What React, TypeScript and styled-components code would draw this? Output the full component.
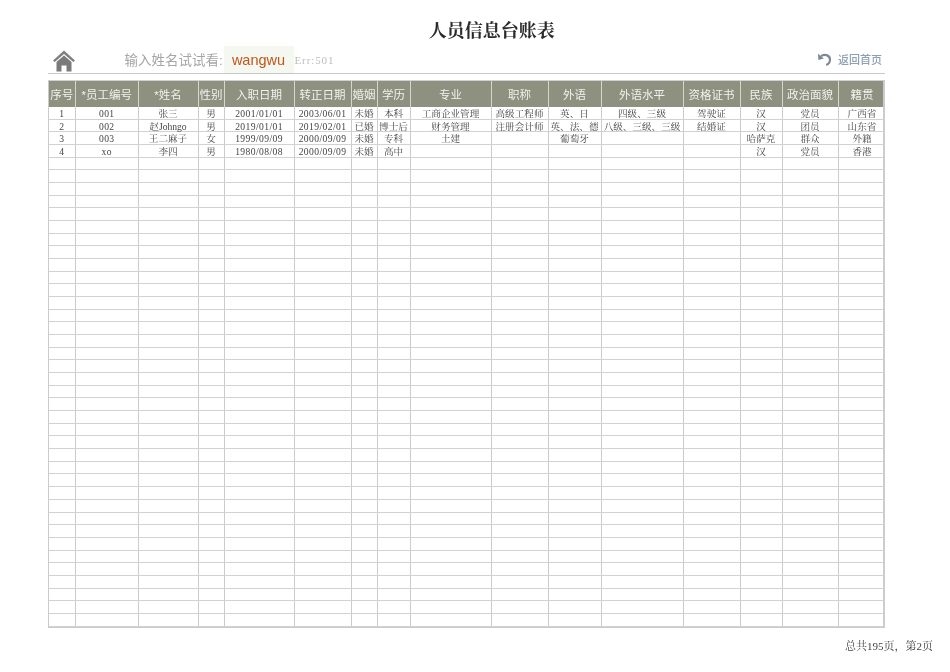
import { createGlobalStyle, styled } from "styled-components";

const GlobalStyle = createGlobalStyle`
  html, body {
    margin: 0;
    padding: 0;
    background: #fff;
  }
`;

const serif = `"Liberation Serif", "Noto Serif CJK SC", "Noto Sans CJK SC", serif`;
const sans = `"Liberation Sans", "Noto Sans CJK SC", sans-serif`;

const columns = "27.5px 62.5px 60px 26px 70px 57px 26px 33px 81px 57px 53px 82px 57px 42px 56px 47px";

const headers = [
  "序号", "*员工编号", "*姓名", "性别", "入职日期", "转正日期", "婚姻", "学历",
  "专业", "职称", "外语", "外语水平", "资格证书", "民族", "政治面貌", "籍贯",
];

const people = [
  ["1", "001", "张三", "男", "2001/01/01", "2003/06/01", "未婚", "本科", "工商企业管理", "高级工程师", "英、日", "四级、三级", "驾驶证", "汉", "党员", "广西省"],
  ["2", "002", "赵Johngo", "男", "2019/01/01", "2019/02/01", "已婚", "博士后", "财务管理", "注册会计师", "英、法、德", "八级、三级、三级", "结婚证", "汉", "团员", "山东省"],
  ["3", "003", "王二麻子", "女", "1999/09/09", "2000/09/09", "未婚", "专科", "土建", "", "葡萄牙", "", "", "哈萨克", "群众", "外籍"],
  ["4", "xo", "李四", "男", "1980/08/08", "2000/09/09", "未婚", "高中", "", "", "", "", "", "汉", "党员", "香港"],
];

const TOTAL_ROWS = 41;
const emptyRow = headers.map(() => "");
const rows = Array.from({ length: TOTAL_ROWS }, (_, i) => people[i] ?? emptyRow);

const isLatin = (text: string) => /^[\x00-\x7f]+$/.test(text);

function HomeIcon() {
  return (
    <svg width="24" height="23" viewBox="0 0 24 23">
      <path d="M1 11.5 12 1.5l11 10-1.8 1.6L12 5 2.8 13.1z" fill="#808080" />
      <path d="M4.5 13 12 6.6l7.5 6.4V22.5h-5v-6h-5v6h-5z" fill="#7a7a7a" />
    </svg>
  );
}

function BackIcon() {
  return (
    <svg width="15" height="15" viewBox="0 0 15 15">
      <path d="M4 4.2C7 1.8 12.6 2.6 13 7.4c.2 2.6-1.4 4.6-3.8 5.6" fill="none" stroke="#7d8896" strokeWidth="2.2" />
      <path d="M1 1.8 1.4 8l5.4-1.6z" fill="#7d8896" />
    </svg>
  );
}

export default function App() {
  return (
    <Page>
      <GlobalStyle />
      <Title>人员信息台账表</Title>
      <Toolbar>
        <HomeLink>
          <HomeIcon />
        </HomeLink>
        <SearchLabel>输入姓名试试看:</SearchLabel>
        <SearchValue>wangwu</SearchValue>
        <ErrorText>Err:501</ErrorText>
        <BackLink>
          <BackIcon />
          <span>返回首页</span>
        </BackLink>
      </Toolbar>
      <Sheet>
        <HeaderRow>
          {headers.map((h) => (
            <HeaderCell key={h}>{h}</HeaderCell>
          ))}
        </HeaderRow>
        {rows.map((row, i) => (
          <Row key={i}>
            {row.map((text, j) => (
              <Cell key={j} $latin={isLatin(text)}>
                {text}
              </Cell>
            ))}
          </Row>
        ))}
      </Sheet>
      <Footer>总共195页，第2页</Footer>
    </Page>
  );
}

const Page = styled.div`
  width: 950px;
  height: 672px;
  box-sizing: border-box;
  padding: 0 65px 0 47.5px;
  overflow: hidden;
  display: flex;
  flex-direction: column;
  will-change: opacity;
`;

const Title = styled.h1`
  margin: 19px 0 0;
  height: 22px;
  line-height: 21px;
  padding-left: 51px;
  text-align: center;
  font-family: "Noto Serif CJK SC", ${serif};
  font-size: 18px;
  font-weight: 700;
  color: #2a2a2a;
`;

const Toolbar = styled.div`
  height: 33px;
  display: flex;
  align-items: center;
  border-bottom: 1px solid #c8c8c8;
  box-sizing: border-box;
`;

const HomeLink = styled.div`
  width: 24px;
  height: 23px;
  margin: 7px 0 0 4px;
`;

const SearchLabel = styled.span`
  width: 99px;
  margin: 4px 0 0 49px;
  white-space: nowrap;
  font-family: ${sans};
  font-size: 13.5px;
  color: #a6a6a6;
`;

const SearchValue = styled.span`
  width: 70px;
  height: 27px;
  line-height: 29px;
  margin-top: 5px;
  text-align: center;
  background: #f4f8f0;
  font-family: ${sans};
  font-size: 14.5px;
  color: #c0561c;
`;

const ErrorText = styled.span`
  margin: 5px 0 0 1px;
  font-family: ${serif};
  font-size: 11px;
  letter-spacing: 0.9px;
  color: #bdbdbd;
`;

const BackLink = styled.div`
  margin: 4px 3px 0 auto;
  display: flex;
  align-items: center;
  gap: 6px;
  font-family: ${sans};
  font-size: 11px;
  font-weight: 500;
  color: #8fa0b5;
`;

const Sheet = styled.div`
  margin-top: 6px;
  width: 837.5px;
  box-sizing: border-box;
  border-left: 1px solid #cacaca;
  border-right: 2px solid #cccccc;
  border-bottom: 1px solid #cacaca;
`;

const HeaderRow = styled.div`
  display: grid;
  grid-template-columns: ${columns};
  height: 27px;
  background: #8f9180;
  border-top: 1px solid #d0d0d0;
  box-sizing: border-box;
`;

const HeaderCell = styled.div`
  display: flex;
  align-items: center;
  justify-content: center;
  white-space: nowrap;
  overflow: hidden;
  border-right: 1px solid #d6d6cf;
  font-family: ${sans};
  font-size: 11.5px;
  color: #f1f1ec;
  &:last-child {
    border-right: 0;
  }
`;

const Row = styled.div`
  display: grid;
  grid-template-columns: ${columns};
  height: 12.68px;
  box-sizing: border-box;
  border-bottom: 1px solid #d2d2d2;
`;

const Cell = styled.div<{ $latin: boolean }>`
  display: flex;
  align-items: center;
  justify-content: center;
  box-sizing: border-box;
  white-space: nowrap;
  line-height: 11px;
  padding-top: 1px;
  border-right: 1px solid #cccccc;
  font-family: ${serif};
  font-size: 9.6px;
  letter-spacing: ${(p) => (p.$latin ? "0.4px" : "0")};
  color: #444;
  &:last-child {
    border-right: 0;
  }
`;

const Footer = styled.div`
  margin: 11px -48px 0 0;
  text-align: right;
  font-family: ${serif};
  font-size: 11px;
  line-height: 14px;
  color: #444;
`;
